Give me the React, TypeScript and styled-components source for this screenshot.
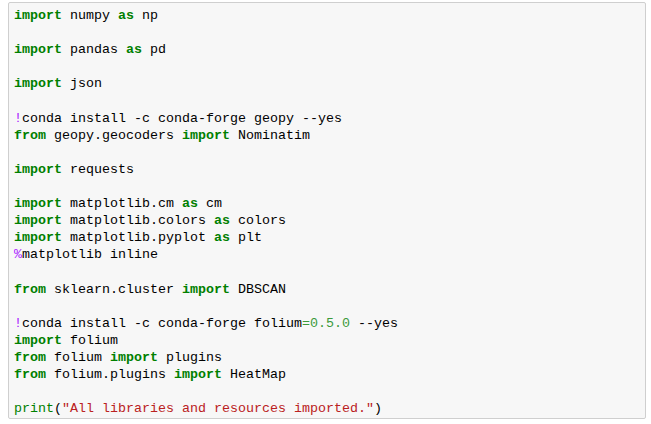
import React from "react";
import styled, { createGlobalStyle } from "styled-components";

const Global = createGlobalStyle`
  html, body { margin: 0; padding: 0; background: #ffffff; }
`;

const Page = styled.div`
  padding: 2px 0 0 8px;
`;

const Cell = styled.div`
  width: 638px;
  height: 417px;
  box-sizing: border-box;
  background: #f7f7f7;
  border: 1px solid #cfcfcf;
  border-radius: 2px;
  padding: 4px 5px;
`;

const Code = styled.pre`
  margin: 0;
  font-family: "Liberation Mono", "Courier New", monospace;
  font-size: 13.33px;
  line-height: 17.1px;
  color: #000000;
  white-space: pre;
`;

const Kw = styled.span`
  color: #008000;
  font-weight: bold;
`;

const Op = styled.span`
  color: #aa22ff;
`;

const Num = styled.span`
  color: #3a9a3a;
`;

const Str = styled.span`
  color: #ba2121;
`;

const Builtin = styled.span`
  color: #008000;
`;

export default function App() {
  return (
    <>
      <Global />
      <Page>
        <Cell>
          <Code>
            <Kw>import</Kw> numpy <Kw>as</Kw> np{"\n"}
            {"\n"}
            <Kw>import</Kw> pandas <Kw>as</Kw> pd{"\n"}
            {"\n"}
            <Kw>import</Kw> json{"\n"}
            {"\n"}
            <Op>!</Op>conda install -c conda-forge geopy --yes{"\n"}
            <Kw>from</Kw> geopy.geocoders <Kw>import</Kw> Nominatim{"\n"}
            {"\n"}
            <Kw>import</Kw> requests{"\n"}
            {"\n"}
            <Kw>import</Kw> matplotlib.cm <Kw>as</Kw> cm{"\n"}
            <Kw>import</Kw> matplotlib.colors <Kw>as</Kw> colors{"\n"}
            <Kw>import</Kw> matplotlib.pyplot <Kw>as</Kw> plt{"\n"}
            <Op>%</Op>matplotlib inline{"\n"}
            {"\n"}
            <Kw>from</Kw> sklearn.cluster <Kw>import</Kw> DBSCAN{"\n"}
            {"\n"}
            <Op>!</Op>conda install -c conda-forge folium<Num>=0.5.0</Num> --yes{"\n"}
            <Kw>import</Kw> folium{"\n"}
            <Kw>from</Kw> folium <Kw>import</Kw> plugins{"\n"}
            <Kw>from</Kw> folium.plugins <Kw>import</Kw> HeatMap{"\n"}
            {"\n"}
            <Builtin>print</Builtin>(<Str>"All libraries and resources imported."</Str>)
          </Code>
        </Cell>
      </Page>
    </>
  );
}
